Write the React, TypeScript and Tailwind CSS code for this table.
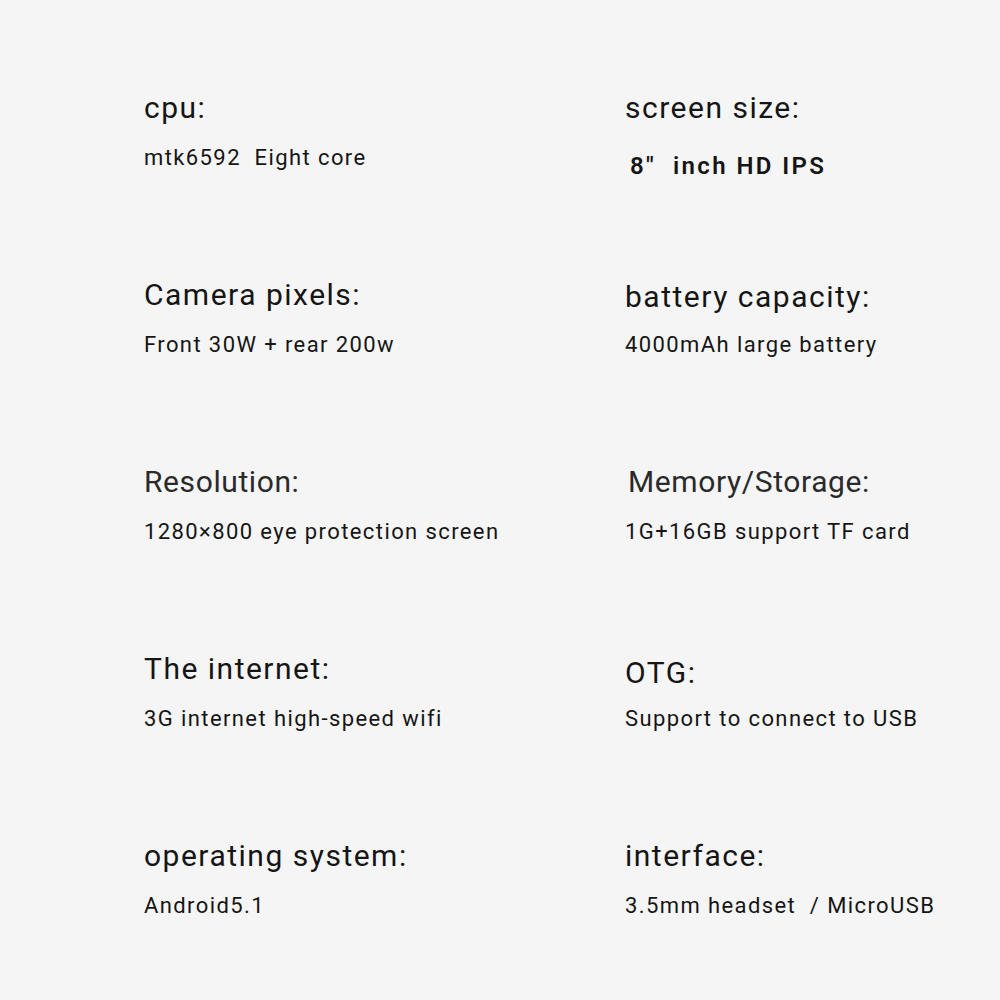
type Spec = { title: string; value: string; titleClass?: string; valueClass?: string };

const baseTitle = "tracking-[1.5px] text-[#151515]";
const baseValue = "text-[22px] leading-[28px] tracking-[1.4px]";

const specs: Spec[] = [
  { title: "cpu:", value: "mtk6592\u00a0\u00a0Eight core" },
  {
    title: "screen size:",
    value: "8\u2033\u00a0 inch HD IPS",
    valueClass: "text-[24px] leading-[28px] font-semibold tracking-[2.4px] pl-[5px] mt-[8px] -mb-[8px]",
  },
  { title: "Camera pixels:", value: "Front 30W + rear 200w" },
  { title: "battery capacity:", value: "4000mAh large battery", titleClass: `${baseTitle} mt-[2px] -mb-[2px]` },
  { title: "Resolution:", value: "1280×800 eye protection screen", titleClass: "tracking-[0.6px] text-[#2a2a2a]" },
  { title: "Memory/Storage:", value: "1G+16GB support TF card", titleClass: "tracking-[0.6px] pl-[3px] text-[#2a2a2a]" },
  { title: "The internet:", value: "3G internet high-speed wifi" },
  { title: "OTG:", value: "Support to connect to USB", titleClass: `${baseTitle} mt-[4px] -mb-[4px]` },
  { title: "operating system:", value: "Android5.1" },
  { title: "interface:", value: "3.5mm headset\u00a0 / MicroUSB" },
];

export default function App() {
  return (
    <div className="w-[1000px] h-[1000px] bg-[#f5f5f5] text-[#151515] font-['Roboto',sans-serif]">
      <div className="grid grid-cols-[481px_1fr] gap-y-[105px] pl-[144px] pt-[90px]">
        {specs.map((s) => (
          <div key={s.title} className="flex flex-col gap-[18px]">
            <div className={`text-[30px] leading-[36px] ${s.titleClass ?? baseTitle}`}>{s.title}</div>
            <div className={s.valueClass ?? baseValue}>{s.value}</div>
          </div>
        ))}
      </div>
    </div>
  );
}
